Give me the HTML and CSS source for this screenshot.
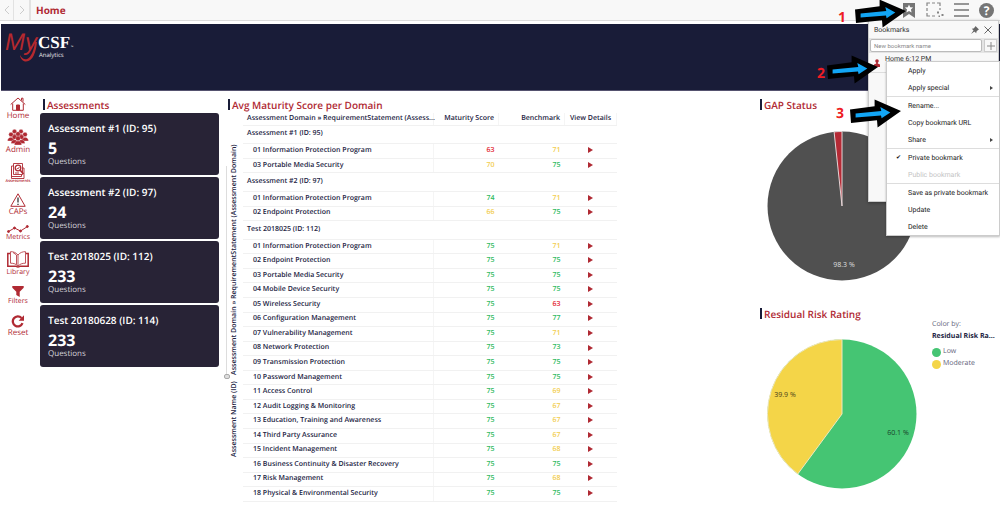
FILE: index.html
```html
<!DOCTYPE html>
<html lang="en">
<head>
<meta charset="utf-8">
<title>MyCSF Analytics</title>
<link rel="stylesheet" href="styles.css">
</head>
<body>
<header class="topbar">
  <button class="nav" aria-label="Back"><svg width="6" height="10" viewBox="0 0 6 10"><path d="M5 1L1 5l4 4"/></svg></button>
  <button class="nav" aria-label="Forward"><svg width="6" height="10" viewBox="0 0 6 10"><path d="M1 1l4 4-4 4"/></svg></button>
  <h1 class="page-title">Home</h1>
  <div class="tools">
    <button class="tool" aria-label="Bookmarks"><svg width="14" height="15" viewBox="0 0 14 15"><path d="M1 0h12v15l-6-4-6 4z" fill="#757575"/><path d="M7 1.600l1.200 2.700 2.900.3-2.200 1.900.7 2.900L7 7.900 4.400 9.400l.7-2.900-2.200-1.900 2.900-.3z" fill="#fff"/></svg></button>
    <button class="tool" aria-label="Marking"><svg width="18" height="16" viewBox="0 0 18 16" fill="none" stroke="#858585" stroke-width="1.200"><path d="M1 4V1h3M6 1h3M11 1h3v3M1 6v3M1 11v3h3M6 14h3M14 6v2"/><path d="M11 9.500h2v2h-2zM15.500 12h2v2h-2zM12.500 13.500h1.500V15h-1.500z" fill="#858585" stroke="none"/></svg></button>
    <button class="tool" aria-label="Menu"><svg width="15" height="14" viewBox="0 0 15 14"><path d="M0 1h15M0 7h15M0 13h15" stroke="#757575" stroke-width="1.600"/></svg></button>
    <button class="tool help" aria-label="Help">?</button>
  </div>
</header>

<div class="banner">
  <svg class="logo" width="70" height="40" viewBox="0 0 70 40" role="img" aria-label="MyCSF Analytics">
    <text x="0" y="22" class="logo-my">My</text>
    <path d="M32 14c-1 10-4 19.500-11 19.500-3 0-5.500-2.500-6-6.500 2 3.500 4 4.700 6.500 4.200C26 30 29 22 30 14z" fill="#b5292f"/>
    <text x="33" y="20" class="logo-csf">CSF</text>
    <text x="66" y="20" class="logo-tm">™</text>
    <text x="34" y="29" class="logo-sub">Analytics</text>
  </svg>
</div>

<main class="board">
  <nav class="side">
    <a href="#"><svg width="16" height="14" viewBox="0 0 16 14" fill="none" stroke="#b02a33"><path d="M.7 7.500L8 1l7.300 6.500M2.700 6.500v6.800h10.600V6.500M11.500 3.500V1.200h1.500v3.500"/><path d="M6.500 13V8h3v5z" fill="#b02a33"/></svg><span>Home</span></a>
    <a href="#"><svg width="22" height="16" viewBox="0 0 22 16" fill="#b02a33" stroke="#fff" stroke-width=".3"><circle cx="7.500" cy="2.500" r="2.200"/><circle cx="14" cy="2.500" r="2.200"/><path d="M4.500 8c0-4 6-4 6 0zM11 8c0-4 6-4 6 0z"/><circle cx="4" cy="5.500" r="2.300"/><circle cx="18" cy="5.500" r="2.300"/><circle cx="11" cy="5" r="2.300"/><path d="M.5 12c0-5 7-5 7 0zM14.500 12c0-5 7-5 7 0z"/><circle cx="7.500" cy="8" r="2.300"/><circle cx="14.500" cy="8" r="2.300"/><path d="M4 14.500c0-5 7-5 7 0zM11 14.500c0-5 7-5 7 0z"/><circle cx="11" cy="9.500" r="2.400"/><path d="M7.300 16c0-5.500 7.400-5.500 7.400 0z"/></svg><span>Admin</span></a>
    <a href="#" class="tiny"><svg width="16" height="16" viewBox="0 0 16 16" fill="none" stroke="#b02a33" stroke-width=".9"><path d="M3.500.5h9v11h-9zM3.500 3H1.500v10.500h10v-2M1.500 6v9.500h12.500V5h-1.500"/><circle cx="8" cy="5" r="2.800" stroke-width="1.300"/><path d="M10 7l3.500 4" stroke-width="1.600"/><path d="M5 10h4M6.800 5l1 1 1.600-2"/></svg><span>Assessments</span></a>
    <a href="#"><svg width="16" height="14" viewBox="0 0 16 14" fill="none" stroke="#b02a33"><path d="M8 .8l7.200 12.500H.8z"/><path d="M8 4.500v5M8 10.700v1.300" stroke="#333" stroke-width="1.300"/></svg><span>CAPs</span></a>
    <a href="#" class="small"><svg width="22" height="8" viewBox="0 0 22 8" fill="#b02a33" stroke="#b02a33"><path d="M1.500 6.500l6-3.500 6 3 7-4.500" fill="none"/><circle cx="1.500" cy="6.500" r="1"/><circle cx="7.500" cy="3" r="1"/><circle cx="13.500" cy="6" r="1"/><circle cx="20.300" cy="1.500" r="1"/></svg><span>Metrics</span></a>
    <a href="#" class="small"><svg width="22" height="17" viewBox="0 0 22 17" fill="none" stroke="#b02a33"><path d="M3 2.500H.8v12.700H9c.5 1 3.500 1 4 0h8.200V2.500H19" stroke-width="1.500"/><path d="M11 4C9 1.500 6 .5 3.500.7v11.500c3 0 6 .8 7.500 3 1.500-2.200 4.500-3 7.500-3V.7C16 .5 13 1.500 11 4zM11 4v11M6 1.500l3.500 2.500v9.500" stroke-width=".8"/></svg><span>Library</span></a>
    <a href="#" class="small"><svg width="12" height="11" viewBox="0 0 12 11" fill="#b02a33"><path d="M.3 0h11.400v1.800L7.700 5.700V11L4.300 9V5.700L.3 1.800z"/></svg><span>Filters</span></a>
    <a href="#"><svg width="14" height="13" viewBox="0 0 14 13"><path d="M11.500 8.200A5 5 0 1 1 10.500 3" fill="none" stroke="#b02a33" stroke-width="2.300"/><path d="M13 .3v5.400H7.600z" fill="#b02a33"/></svg><span>Reset</span></a>
  </nav>

  <section class="assess">
    <h2>Assessments</h2>
    <div class="cards">
      <article class="card"><h3>Assessment #1 (ID: 95)</h3><strong>5</strong><p>Questions</p></article>
      <article class="card"><h3>Assessment #2 (ID: 97)</h3><strong>24</strong><p>Questions</p></article>
      <article class="card"><h3>Test 2018025 (ID: 112)</h3><strong>233</strong><p>Questions</p></article>
      <article class="card"><h3>Test 20180628 (ID: 114)</h3><strong>233</strong><p>Questions</p></article>
    </div>
  </section>

  <section class="scores">
    <h2>Avg Maturity Score per Domain</h2>
    <div class="score-body">
      <div class="slider"><i></i></div>
      <div class="axis"><span>Assessment Name (ID)</span><span>Assessment Domain » RequirementStatement (Assessment Domain)</span></div>
      <div class="table-wrap">
      <table>
        <colgroup><col><col class="c-score"><col class="c-bench"><col class="c-view"></colgroup>
        <thead><tr><th>Assessment Domain » RequirementStatement (Assess...</th><th>Maturity Score</th><th>Benchmark</th><th>View Details</th></tr></thead>
        <tbody>
        <tr class="group"><th colspan="4">Assessment #1 (ID: 95)</th></tr>
        <tr><td>01 Information Protection Program</td><td class="r">63</td><td class="y">71</td><td><a href="#" aria-label="View"></a></td></tr>
        <tr><td>03 Portable Media Security</td><td class="y">70</td><td class="g">75</td><td><a href="#" aria-label="View"></a></td></tr>
        <tr class="group"><th colspan="4">Assessment #2 (ID: 97)</th></tr>
        <tr><td>01 Information Protection Program</td><td class="g">74</td><td class="y">71</td><td><a href="#" aria-label="View"></a></td></tr>
        <tr><td>02 Endpoint Protection</td><td class="y">66</td><td class="g">75</td><td><a href="#" aria-label="View"></a></td></tr>
        <tr class="group"><th colspan="4">Test 2018025 (ID: 112)</th></tr>
        <tr><td>01 Information Protection Program</td><td class="g">75</td><td class="y">71</td><td><a href="#" aria-label="View"></a></td></tr>
        <tr><td>02 Endpoint Protection</td><td class="g">75</td><td class="g">75</td><td><a href="#" aria-label="View"></a></td></tr>
        <tr><td>03 Portable Media Security</td><td class="g">75</td><td class="g">75</td><td><a href="#" aria-label="View"></a></td></tr>
        <tr><td>04 Mobile Device Security</td><td class="g">75</td><td class="g">75</td><td><a href="#" aria-label="View"></a></td></tr>
        <tr><td>05 Wireless Security</td><td class="g">75</td><td class="r">63</td><td><a href="#" aria-label="View"></a></td></tr>
        <tr><td>06 Configuration Management</td><td class="g">75</td><td class="g">77</td><td><a href="#" aria-label="View"></a></td></tr>
        <tr><td>07 Vulnerability Management</td><td class="g">75</td><td class="y">71</td><td><a href="#" aria-label="View"></a></td></tr>
        <tr><td>08 Network Protection</td><td class="g">75</td><td class="g">73</td><td><a href="#" aria-label="View"></a></td></tr>
        <tr><td>09 Transmission Protection</td><td class="g">75</td><td class="g">75</td><td><a href="#" aria-label="View"></a></td></tr>
        <tr><td>10 Password Management</td><td class="g">75</td><td class="g">75</td><td><a href="#" aria-label="View"></a></td></tr>
        <tr><td>11 Access Control</td><td class="g">75</td><td class="y">69</td><td><a href="#" aria-label="View"></a></td></tr>
        <tr><td>12 Audit Logging &amp; Monitoring</td><td class="g">75</td><td class="y">67</td><td><a href="#" aria-label="View"></a></td></tr>
        <tr><td>13 Education, Training and Awareness</td><td class="g">75</td><td class="y">67</td><td><a href="#" aria-label="View"></a></td></tr>
        <tr><td>14 Third Party Assurance</td><td class="g">75</td><td class="y">67</td><td><a href="#" aria-label="View"></a></td></tr>
        <tr><td>15 Incident Management</td><td class="g">75</td><td class="y">68</td><td><a href="#" aria-label="View"></a></td></tr>
        <tr><td>16 Business Continuity &amp; Disaster Recovery</td><td class="g">75</td><td class="g">75</td><td><a href="#" aria-label="View"></a></td></tr>
        <tr><td>17 Risk Management</td><td class="g">75</td><td class="y">68</td><td><a href="#" aria-label="View"></a></td></tr>
        <tr><td>18 Physical &amp; Environmental Security</td><td class="g">75</td><td class="g">75</td><td><a href="#" aria-label="View"></a></td></tr>
        </tbody>
      </table>
      </div>
    </div>
  </section>

  <div class="charts">
    <section class="chart">
      <h2>GAP Status</h2>
      <svg class="pie" width="150" height="150" viewBox="0 0 150 150"><circle cx="75" cy="75" r="74.500" fill="#505050"/><path d="M75 75L67.100 .9A74.500 74.500 0 0 1 75 .5z" fill="#b52a35" stroke="#e4d5d6"/><text x="77" y="136" fill="#ddd">98.3 %</text></svg>
    </section>
    <section class="chart">
      <h2>Residual Risk Rating</h2>
      <div class="pie-row">
        <svg class="pie" width="150" height="150" viewBox="0 0 150 150"><circle cx="75" cy="75" r="74.500" fill="#45c573"/><path d="M75 75L30.800 135A74.500 74.500 0 0 1 75 .5z" fill="#f4d548" stroke="#eee8c0"/><text x="18" y="58" fill="#4b421a">39.9 %</text><text x="131" y="96" fill="#17402a">60.1 %</text></svg>
        <div class="legend"><p>Color by:</p><strong>Residual Risk Ra...</strong><ul><li><i class="low"></i>Low</li><li><i class="moderate"></i>Moderate</li></ul></div>
      </div>
    </section>
  </div>
</main>

<aside class="bookmarks">
  <div class="bm-head"><h2>Bookmarks</h2>
    <button aria-label="Pin"><svg width="8" height="8" viewBox="0 0 8 8"><path d="M4.500 0L8 3.500l-1 .5-1.500 1.500-.3 1.700L.8 2.800l1.700-.3L4 1zM2.500 4.500l1 1L0 8z" fill="#666"/></svg></button>
    <button aria-label="Close"><svg width="8" height="8" viewBox="0 0 8 8"><path d="M.5.5l7 7M7.500.5l-7 7" stroke="#666"/></svg></button></div>
  <div class="bm-new"><input type="text" placeholder="New bookmark name" aria-label="New bookmark name"><button aria-label="Add"><svg width="8" height="8" viewBox="0 0 8 8"><path d="M4 0v8M0 4h8" stroke="#888"/></svg></button></div>
  <div class="bm-item"><svg width="6" height="8" viewBox="0 0 6 8" fill="#b02a33"><circle cx="3" cy="2" r="1.800"/><path d="M2.200 3h1.600v1.500L6 5.500V8H0V5.500l2.200-1z"/></svg><span>Home 6:12 PM</span></div>
</aside>

<div class="menu" role="menu">
  <button role="menuitem">Apply</button>
  <button role="menuitem" class="sub">Apply special</button>
  <hr>
  <button role="menuitem">Rename...</button>
  <button role="menuitem">Copy bookmark URL</button>
  <button role="menuitem" class="sub">Share</button>
  <hr>
  <button role="menuitem" class="checked">Private bookmark</button>
  <button role="menuitem" disabled>Public bookmark</button>
  <hr>
  <button role="menuitem">Save as private bookmark</button>
  <button role="menuitem">Update</button>
  <button role="menuitem">Delete</button>
</div>

<svg class="notes" width="200" height="130" viewBox="0 0 200 130">
  <defs><g id="arrow"><path d="M-51-1.400L-50 12L-24 9.300L-23.400 16.600L0 0L-26.400-11.400L-26.400-4.700z" fill="#000"/><path d="M-45.400 2.600V6.600L-20 4.600L-19.400 7.300L-10.700 1.600L-20.700-4L-19.700 0z" fill="#12a5f4"/></g></defs>
  <use href="#arrow" x="106" y="11"/><use href="#arrow" x="78" y="67"/><use href="#arrow" x="101" y="111"/>
  <text x="38" y="22">1</text><text x="17" y="78">2</text><text x="36" y="118">3</text>
</svg>
</body>
</html>
```
FILE: styles.css
```css
* { box-sizing: border-box; }
body { margin: 0; min-height: 100vh; position: relative; overflow: hidden; background: #fff; color: #22233f; font: 7px/10px "Open Sans", sans-serif; text-rendering: geometricPrecision; }
h1, h2, h3, p, ul { margin: 0; padding: 0; }
button { border: 0; padding: 0; background: none; font: inherit; color: inherit; text-rendering: inherit; }
a { color: #b02a33; text-decoration: none; }
svg { display: block; flex: none; }

.topbar { display: flex; align-items: center; height: 21px; background: #f8f8f8; border-bottom: 1px solid #dcdcdc; }
.nav { width: 14px; height: 20px; display: grid; place-items: center; border-right: 1px solid #e2e2e2; }
.nav + .nav { width: 17px; border-right-width: 2px; }
.nav path { fill: none; stroke: #ccc; }
.page-title { margin-left: 5px; font-size: 10px; line-height: 20px; color: #b02a33; }
.tools { margin-left: auto; display: flex; align-items: center; gap: 10px; padding-right: 6px; }
.help { width: 15px; height: 15px; border-radius: 50%; background: #757575; color: #fff; font: bold 12px/15px "Open Sans", sans-serif; }

.banner { height: 67px; margin: 3px 0 0 1px; padding: 4px; background: #191c38; border-bottom: 1px solid #55526f; }
.logo { overflow: visible; }
.logo-my { font: italic 24px "Liberation Sans", sans-serif; fill: #b5292f; }
.logo-csf { font: bold 17px "Liberation Serif", serif; fill: #fff; }
.logo-tm { font-size: 3px; fill: #fff; }
.logo-sub { font-size: 6px; fill: #e8e8ee; }

.board { display: grid; grid-template-columns: 40px 179fr 541fr 240fr; align-items: start; padding-top: 6px; }
.side { display: flex; flex-direction: column; gap: 8px; width: 36px; }
.side a { display: flex; flex-direction: column; align-items: center; font-size: 8px; }
.side .small { font-size: 7px; }
.side .tiny { font-size: 4px; line-height: 6px; font-weight: 600; }
.board h2 { font-size: 10px; font-weight: 600; line-height: 16px; color: #b02a33; white-space: nowrap; }
.board h2::before { content: ""; display: inline-block; width: 2px; height: 11px; margin-right: 2px; background: #191c38; vertical-align: -1px; }
.assess h2 { padding-left: 3px; }

.cards { display: grid; gap: 2px; }
.card { height: 62px; padding: 8px; border-radius: 3px; background: #282336; color: #fff; }
.card h3 { font-size: 10px; font-weight: 600; line-height: 14px; }
.card strong { display: block; margin-top: 4px; font-size: 16px; line-height: 18px; }
.card p { color: #d5d3da; font-size: 8px; }

.scores h2 { padding-left: 9px; }
.score-body { display: flex; }
.slider { align-self: flex-start; width: 8px; height: 208px; margin-top: 53px; border-right: 1px solid #ddd; position: relative; }
.slider i { position: absolute; left: 5px; bottom: -5px; width: 6px; height: 5px; border: 1px solid #aaa; border-radius: 2px; background: #ddd; }
.axis { align-self: flex-start; display: flex; gap: 6px; width: 16px; height: 344px; line-height: 16px; font-weight: 600; writing-mode: vertical-rl; transform: rotate(180deg); white-space: nowrap; }
.table-wrap { height: 389px; width: 374px; }
table { width: 100%; height: 100%; table-layout: fixed; border-collapse: collapse; font-weight: 600; line-height: 10px; }
.c-score { width: 65px; }
.c-bench { width: 66px; }
.c-view { width: 52px; }
th, td { padding: 0 4px; height: 14px; text-align: right; border-bottom: 1px solid #f1f1f1; border-right: 1px solid #f5f5f5; white-space: nowrap; font-weight: inherit; }
thead th { height: 12px; }
th:first-child, td:first-child { text-align: left; }
td:first-child { padding-left: 10px; }
td + td { border-right: 0; }
td:last-child, th:last-child { padding: 0; text-align: center; }
.group th:last-child { height: 18px; padding: 0 4px; text-align: left; border-right: 0; }
td a { display: inline-block; border: 3px solid transparent; border-left: 5px solid #b02a33; border-right: 0; vertical-align: middle; }
.r { color: #e2232c; } .y { color: #f2cd4d; } .g { color: #2fba60; }

.charts { display: grid; gap: 25px; }
.pie { margin: 18px 0 0 7px; }
.pie text { font-size: 7px; text-anchor: middle; }
.chart + .chart .pie { margin-top: 17px; }
.pie-row { display: flex; gap: 15px; }
.legend { margin-top: -2px; color: #63637a; white-space: nowrap; }
.legend strong { display: block; margin: 2px 0 4px; color: #22233f; }
.legend ul { list-style: none; }
.legend li { display: flex; align-items: center; gap: 2px; line-height: 12px; }
.legend i { width: 9px; height: 9px; border-radius: 50%; }
.low { background: #45c573; } .moderate { background: #f4d548; }

.bookmarks { position: absolute; top: 20px; right: 1px; width: 131px; height: 182px; background: #f8f8f8; border: 1px solid #ccc; box-shadow: 0 1px 3px #0005; font-family: Roboto, sans-serif; color: #333; }
.bm-head { display: flex; align-items: center; gap: 5px; height: 17px; padding: 0 6px 0 5px; }
.bm-head h2 { flex: 1; font-size: 7px; font-weight: 400; }
.bm-new { display: flex; gap: 2px; padding: 1px; height: 15px; background: #e4e4e4; }
.bm-new input { flex: 1; min-width: 0; padding: 0 3px; border: 1px solid #bbb; border-radius: 2px; background: #fff; font: 6px Roboto, sans-serif; }
.bm-new input::placeholder { color: #888; }
.bm-new button { width: 13px; display: grid; place-items: center; border: 1px solid #ccc; background: #f8f8f8; }
.bm-item { display: flex; align-items: center; gap: 5px; height: 19px; margin-top: 1px; padding: 0 5px; border-bottom: 1px solid #ddd; font-size: 7px; }
.bm-item span { align-self: flex-start; }

.menu { position: absolute; top: 61px; right: 0; width: 114px; background: #fff; border: 1px solid #ccc; box-shadow: 0 1px 2px #0004; font-family: Roboto, sans-serif; color: #222; }
.menu button { display: flex; width: 100%; align-items: center; height: 17px; padding: 0 6px 0 21px; font-size: 7px; position: relative; }
.menu button:disabled { color: #c4c4c4; }
.menu hr { margin: 0; border: 0; border-top: 1px solid #ddd; }
.menu .sub::after { content: ""; margin-left: auto; border: 2px solid transparent; border-left: 3px solid #444; border-right: 0; }
.menu .checked::before { content: "✔"; position: absolute; left: 9px; font: 6px "DejaVu Sans", sans-serif; color: #111; }

.notes { position: absolute; top: 0; right: 0; pointer-events: none; }
.notes text { font: bold 14px "Open Sans", sans-serif; fill: #ee1c24; }
```
